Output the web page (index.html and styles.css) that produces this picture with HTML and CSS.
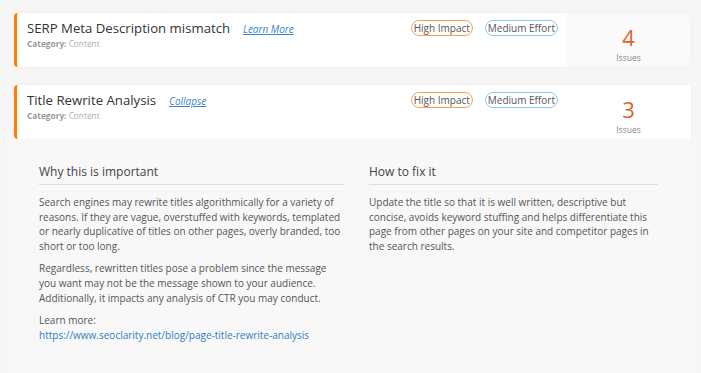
FILE: index.html
```html
<html lang="en">
    <head>
        <title>Issues</title>

        <link rel="stylesheet" href="styles.css">
    </head>

    <body>
        <div class="list">
            <div class="card">
                <div class="info">
                    <div class="top">
                        <div class="title">
                            <span class="name">SERP Meta Description mismatch</span>
                            <a class="toggle" href="#">Learn More</a>
                        </div>
                        <div class="badges">
                            <span class="badge impact">High Impact</span>
                            <span class="badge effort">Medium Effort</span>
                        </div>
                    </div>
                    <div class="category"><b>Category:</b> Content</div>
                </div>
                <div class="count">
                    <span class="number">4</span>
                    <small>Issues</small>
                </div>
            </div>

            <div class="item open">
                <div class="card">
                    <div class="info">
                        <div class="top">
                            <div class="title">
                                <span class="name">Title Rewrite Analysis</span>
                                <a class="toggle" href="#">Collapse</a>
                            </div>
                            <div class="badges">
                                <span class="badge impact">High Impact</span>
                                <span class="badge effort">Medium Effort</span>
                            </div>
                        </div>
                        <div class="category"><b>Category:</b> Content</div>
                    </div>
                    <div class="count">
                        <span class="number">3</span>
                        <small>Issues</small>
                    </div>
                </div>

                <div class="details">
                    <div class="column wide">
                        <h4>Why this is important</h4>

                        <p>Search engines may rewrite titles algorithmically for a variety of reasons. If they are vague, overstuffed with keywords, templated or nearly duplicative of titles on other pages, overly branded, too short or too long.</p>

                        <p>Regardless, rewritten titles pose a problem since the message you want may not be the message shown to your audience. Additionally, it impacts any analysis of CTR you may conduct.</p>

                        <p>Learn more:<br><a href="#">https://www.seoclarity.net/blog/page-title-rewrite-analysis</a></p>
                    </div>

                    <div class="column">
                        <h4>How to fix it</h4>

                        <p>Update the title so that it is well written, descriptive but concise, avoids keyword stuffing and helps differentiate this page from other pages on your site and competitor pages in the search results.</p>
                    </div>
                </div>
            </div>
        </div>
    </body>
</html>
```

FILE: styles.css
```css
body {
    margin: 0;
    padding: 0;

    font-family: "Open Sans", Arial, sans-serif;
    color: #333;
    background-color: #f7f7f7;
}

.list {
    display: flex;
    flex-direction: column;
    gap: 18px;
    padding: 13px 10px 0 14px;
}

.card {
    display: flex;
    height: 54px;
    border-left: 3px solid #ff7f00;
    border-radius: 4px 0 0 4px;
    background-color: #fff;
    box-shadow: 0 0 6px rgba(0, 0, 0, .04);
}

.info {
    flex-grow: 1;
    display: flex;
    flex-direction: column;
    padding: 7px 8px 0 10px;
}

.top {
    display: flex;
    justify-content: space-between;
    align-items: flex-start;
}

.title {
    display: flex;
    align-items: baseline;
    gap: 13px;
}

.name {
    font-size: 13.2px;
    line-height: 17px;
}

.toggle {
    font-size: 10px;
    font-style: italic;
    color: #3a86c8;
}

.badges {
    display: flex;
    gap: 12px;
}

.badge {
    font-size: 10px;
    line-height: 14px;
    padding: 0 2px;
    border-radius: 8px;
    color: #555;
}

.impact {
    border: 1px solid #f7a050;
}

.effort {
    border: 1px solid #8ecbe3;
}

.category {
    font-size: 8.3px;
    color: #aaa;
    margin-top: 1px;
}

.category b {
    color: #999;
}

.count {
    display: flex;
    flex-direction: column;
    align-items: center;
    width: 125px;
    padding-top: 10px;
    background-color: #fafafa;
}

.open .count {
    background-color: #fff;
}

.number {
    font-size: 22px;
    line-height: 28px;
    color: #d9652e;
}

.count small {
    font-size: 8.5px;
    color: #888;
    margin-top: 1px;
}

.details {
    display: flex;
    gap: 25px;
    padding: 24px 25px 0 25px;
    background-color: #f8f8f8;
    height: 210px;
}

.column {
    width: 289px;
}

.column.wide {
    width: 305px;
}

.details h4 {
    margin: 0 0 10px 0;
    padding-bottom: 4px;
    border-bottom: 1px solid #ddd;
    font-size: 12px;
    font-weight: normal;
    color: #444;
}

.details p {
    margin: 0 0 8px 0;
    font-size: 10px;
    line-height: 14.6px;
    color: #555;
}

.details a {
    color: #2f7dc4;
    text-decoration: none;
}
```
